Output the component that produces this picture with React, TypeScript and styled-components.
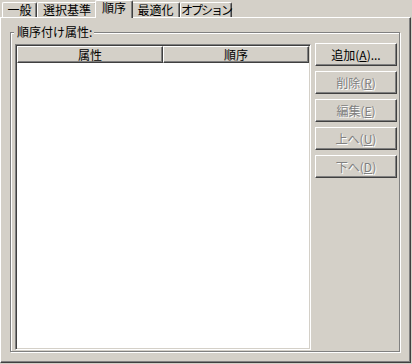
import React from "react";
import styled, { createGlobalStyle, css } from "styled-components";

const Global = createGlobalStyle`
  html, body { margin: 0; padding: 0; background: #d4d0c8; }
  body {
    font-family: "Noto Sans CJK JP", "Noto Sans", sans-serif;
    font-size: 12px;
    color: #000;
  }
`;

const Window = styled.div`
  width: 412px;
  height: 364px;
  background: #d4d0c8;
  display: flex;
  flex-direction: column;
  overflow: hidden;
`;

const TabStrip = styled.div`
  display: flex;
  align-items: flex-end;
  height: 17px;
  padding-left: 2px;
  position: relative;
  z-index: 1;
`;

const Tab = styled.div<{ $active?: boolean; $w: number; $tight?: boolean }>`
  box-sizing: border-box;
  width: ${(p) => p.$w}px;
  height: 15px;
  border-top: 1px solid #fff;
  border-left: 1px solid #fff;
  border-right: 1px solid #404040;
  border-radius: 2px 2px 0 0;
  box-shadow: inset -1px 0 0 #808080;
  background: #d4d0c8;
  display: flex;
  align-items: center;
  justify-content: center;
  line-height: 12px;
  white-space: nowrap;
  position: relative;
  letter-spacing: ${(p) => (p.$tight ? "-2px" : "0")};
  ${(p) =>
    p.$active &&
    css`
      width: ${p.$w + 4}px;
      height: 18px;
      margin: 0 -2px -1px;
      padding-bottom: 3px;
      z-index: 2;
    `}
`;

const Panel = styled.div`
  box-sizing: border-box;
  width: 411px;
  height: 346px;
  border-top: 1px solid #fff;
  border-left: 1px solid #fff;
  border-right: 1px solid #404040;
  border-bottom: 1px solid #404040;
  box-shadow: inset -1px -1px 0 #808080;
  padding: 14px 10px 10px 9px;
  display: flex;
  flex-direction: column;
`;

const Group = styled.div`
  position: relative;
  box-sizing: border-box;
  flex: 1;
  border: 1px solid #808080;
  box-shadow: inset 1px 1px 0 #fff, 1px 1px 0 #fff;
  padding: 10px 1px 1px 4px;
  display: grid;
  grid-template-columns: 296px 82px;
  column-gap: 4px;
`;

const GroupLabel = styled.div`
  position: absolute;
  top: -8px;
  left: 3px;
  height: 14px;
  line-height: 14px;
  padding: 0 2px 0 3px;
  background: #d4d0c8;
  white-space: nowrap;
`;

const ListView = styled.div`
  box-sizing: border-box;
  margin-top: 1px;
  background: #fff;
  border-top: 1px solid #808080;
  border-left: 1px solid #808080;
  border-right: 1px solid #fff;
  border-bottom: 1px solid #fff;
  box-shadow: inset 1px 1px 0 #404040, inset -1px -1px 0 #d4d0c8;
  padding: 1px;
`;

const HeaderRow = styled.div`
  display: grid;
  grid-template-columns: 146px 1fr;
`;

const HeaderCell = styled.div`
  box-sizing: border-box;
  height: 17px;
  background: #d4d0c8;
  border-top: 1px solid #fff;
  border-left: 1px solid #fff;
  border-right: 1px solid #404040;
  border-bottom: 1px solid #404040;
  box-shadow: inset -1px -1px 0 #808080;
  display: flex;
  align-items: center;
  justify-content: center;
  line-height: 14px;
`;

const ButtonColumn = styled.div`
  display: flex;
  flex-direction: column;
  gap: 5px;
`;

const Button = styled.div<{ $disabled?: boolean }>`
  box-sizing: border-box;
  width: 82px;
  height: 23px;
  background: #d4d0c8;
  border-top: 1px solid #fff;
  border-left: 1px solid #fff;
  border-right: 1px solid #404040;
  border-bottom: 1px solid #404040;
  box-shadow: inset -1px -1px 0 #808080;
  display: flex;
  align-items: center;
  justify-content: center;
  line-height: 14px;
  white-space: nowrap;
  color: ${(p) => (p.$disabled ? "#808080" : "#000")};
  text-shadow: ${(p) => (p.$disabled ? "1px 1px 0 #fff" : "none")};
`;

const tabs = [
  { label: "一般", w: 35 },
  { label: "選択基準", w: 60 },
  { label: "順序", w: 34, active: true },
  { label: "最適化", w: 49 },
  { label: "オプション", w: 52, tight: true },
];

const buttons = [
  { pre: "追加(", key: "A", post: ")...", disabled: false },
  { pre: "削除(", key: "R", post: ")", disabled: true },
  { pre: "編集(", key: "E", post: ")", disabled: true },
  { pre: "上へ(", key: "U", post: ")", disabled: true },
  { pre: "下へ(", key: "D", post: ")", disabled: true },
];

export default function App() {
  return (
    <>
      <Global />
      <Window>
        <TabStrip>
          {tabs.map((t) => (
            <Tab key={t.label} $w={t.w} $active={t.active} $tight={t.tight}>
              {t.label}
            </Tab>
          ))}
        </TabStrip>
        <Panel>
          <Group>
            <GroupLabel>順序付け属性:</GroupLabel>
            <ListView>
              <HeaderRow>
                <HeaderCell>属性</HeaderCell>
                <HeaderCell>順序</HeaderCell>
              </HeaderRow>
            </ListView>
            <ButtonColumn>
              {buttons.map((b) => (
                <Button key={b.key} $disabled={b.disabled}>
                  {b.pre}
                  <u>{b.key}</u>
                  {b.post}
                </Button>
              ))}
            </ButtonColumn>
          </Group>
        </Panel>
      </Window>
    </>
  );
}
